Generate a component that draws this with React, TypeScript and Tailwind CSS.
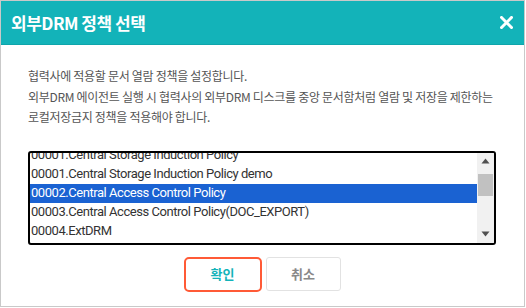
import React from "react";

const items = [
  "00001.Central Storage Induction Policy",
  "00001.Central Storage Induction Policy demo",
  "00002.Central Access Control Policy",
  "00003.Central Access Control Policy(DOC_EXPORT)",
  "00004.ExtDRM",
];

export default function App() {
  const kr = { fontFamily: '"Noto Sans CJK KR", "Noto Sans", sans-serif' };
  const listFont = { fontFamily: 'Roboto, "Liberation Sans", sans-serif' };
  return (
    <div className="w-[526px] h-[308px] bg-white">
      <div className="w-[525px] h-[307px] border border-[#c9c9c9] flex flex-col bg-white">
        <div className="h-[44px] bg-[#13b3b9] border-b border-[#0fa5ab] flex items-center justify-between pl-[10px] pr-[11px] shrink-0">
          <span className="text-white font-bold text-[17px] tracking-[-0.5px]" style={kr}>
            외부DRM 정책 선택
          </span>
          <svg width="13" height="13" viewBox="0 0 13 13">
            <path d="M1.5 1.5 L11.5 11.5 M11.5 1.5 L1.5 11.5" stroke="white" strokeWidth="3" strokeLinecap="square" />
          </svg>
        </div>
        <div className="pl-[27px] pr-[28px] pt-[21px] flex flex-col">
          <div className="text-[12px] leading-[20.5px] text-[#555] tracking-[-0.3px]" style={kr}>
            <div>협력사에 적용할 문서 열람 정책을 설정합니다.</div>
            <div className="whitespace-nowrap">외부DRM 에이전트 실행 시 협력사의 외부DRM 디스크를 중앙 문서함처럼 열람 및 저장을 제한하는</div>
            <div>로컬저장금지 정책을 적용해야 합니다.</div>
          </div>
          <div className="mt-[23px] h-[94px] border-2 border-black rounded-[3px] flex overflow-hidden">
            <div className="flex-1 overflow-hidden">
              <div className="-mt-[7px]" style={listFont}>
                {items.map((t, i) => (
                  <div
                    key={i}
                    className={
                      "h-[19px] flex items-center pl-[1px] text-[13px] tracking-[-0.45px] whitespace-nowrap " +
                      (i === 2 ? "bg-[#1a62d2] text-white" : "text-[#333]")
                    }
                  >
                    {t}
                  </div>
                ))}
              </div>
            </div>
            <div className="w-[17px] flex flex-col items-center bg-[#f1f1f1] shrink-0">
              <div className="h-[17px] w-full flex items-center justify-center">
                <svg width="9" height="6" viewBox="0 0 9 6">
                  <path d="M0.5 5.5 L4.5 0.5 L8.5 5.5 Z" fill="#505050" />
                </svg>
              </div>
              <div className="mt-[4px] h-[22px] w-[15px] bg-[#c1c1c1]" />
              <div className="flex-1" />
              <div className="h-[17px] w-full flex items-center justify-center">
                <svg width="9" height="6" viewBox="0 0 9 6">
                  <path d="M0.5 0.5 L4.5 5.5 L8.5 0.5 Z" fill="#505050" />
                </svg>
              </div>
            </div>
          </div>
          <div className="mt-[12px] flex justify-center gap-[4px]" style={kr}>
            <button className="w-[78px] h-[35px] border-2 border-[#ff5a36] rounded-[5px] text-[#13b3b9] font-bold text-[13px] bg-white">
              확인
            </button>
            <button className="w-[75px] h-[34px] border border-[#e2e2e2] rounded-[3px] text-[#888] font-bold text-[13px] bg-white">
              취소
            </button>
          </div>
        </div>
      </div>
    </div>
  );
}
